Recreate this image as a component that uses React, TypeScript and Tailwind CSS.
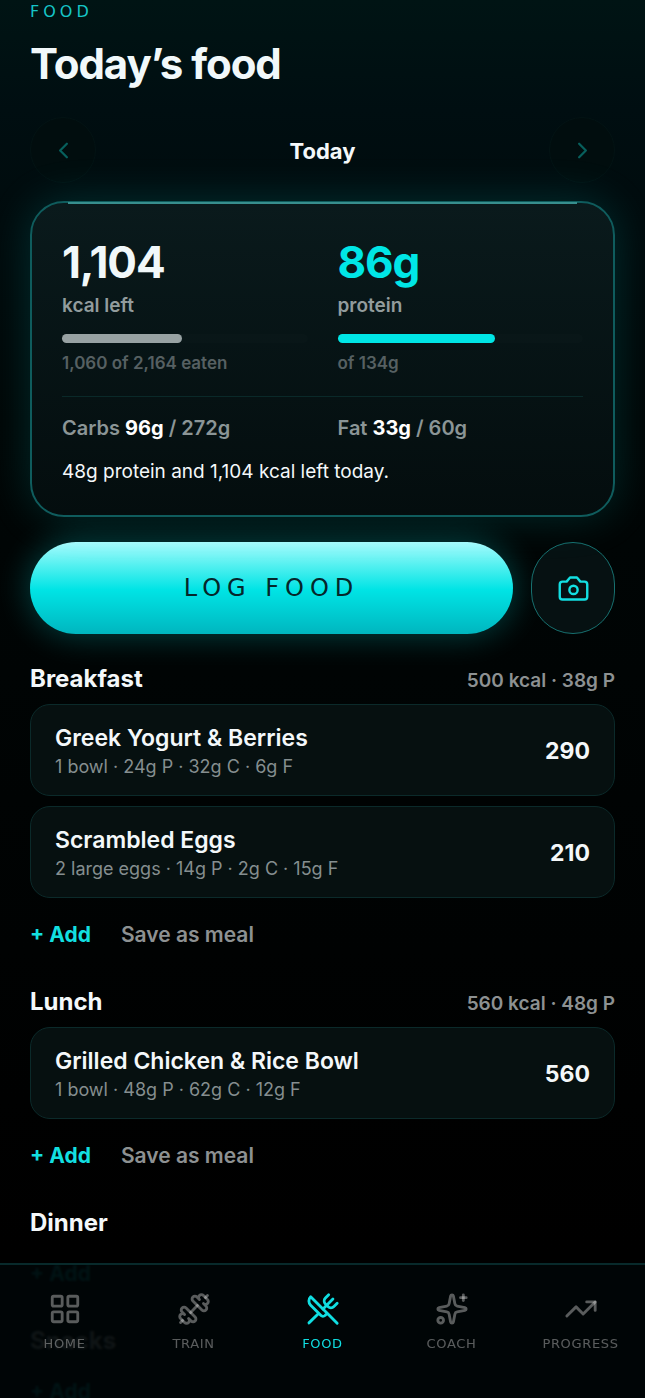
import React, { useState } from 'react';
import {
  ChevronLeft,
  ChevronRight,
  Dumbbell,
  LayoutGrid,
  LucideIcon,
  Sparkles,
  TrendingUp,
  UtensilsCrossed,
} from 'lucide-react';

interface FoodItem {
  name: string;
  detail: string;
  kcal: number;
}

interface Meal {
  name: string;
  summary?: string;
  items: FoodItem[];
}

const MEALS: Meal[] = [
  {
    name: 'Breakfast',
    summary: '500 kcal · 38g P',
    items: [
      { name: 'Greek Yogurt & Berries', detail: '1 bowl · 24g P · 32g C · 6g F', kcal: 290 },
      { name: 'Scrambled Eggs', detail: '2 large eggs · 14g P · 2g C · 15g F', kcal: 210 },
    ],
  },
  {
    name: 'Lunch',
    summary: '560 kcal · 48g P',
    items: [
      { name: 'Grilled Chicken & Rice Bowl', detail: '1 bowl · 48g P · 62g C · 12g F', kcal: 560 },
    ],
  },
  { name: 'Dinner', items: [] },
  { name: 'Snacks', items: [] },
];

const TABS: { label: string; icon: LucideIcon }[] = [
  { label: 'HOME', icon: LayoutGrid },
  { label: 'TRAIN', icon: Dumbbell },
  { label: 'FOOD', icon: UtensilsCrossed },
  { label: 'COACH', icon: Sparkles },
  { label: 'PROGRESS', icon: TrendingUp },
];

const CameraIcon: React.FC = () => (
  <svg
    width="33"
    height="33"
    viewBox="0 0 24 24"
    fill="none"
    stroke="currentColor"
    strokeWidth="1.75"
    strokeLinecap="round"
    strokeLinejoin="round"
    aria-hidden="true"
  >
    <path d="M14.5 4h-5L7 7H4a2 2 0 0 0-2 2v9a2 2 0 0 0 2 2h16a2 2 0 0 0 2-2V9a2 2 0 0 0-2-2h-3l-2.5-3z" />
    <circle cx="12" cy="13" r="3" />
  </svg>
);

interface GoalProps {
  value: string;
  label: string;
  note: string;
  done: number;
  total: number;
  accent?: boolean;
}

const Goal: React.FC<GoalProps> = ({ value, label, note, done, total, accent }) => (
  <div>
    <p className={`text-[44px] leading-[52px] font-bold tracking-tight ${accent ? 'text-[#00e6e6]' : 'text-[#f1f8fa]'}`}>
      {value}
    </p>
    <p className="mt-1 text-[19px] leading-7 font-semibold text-[#929c9d]">{label}</p>
    <div className="mt-[14px] h-[9px] rounded-full bg-white/[0.01]">
      <div
        className={`h-full rounded-full ${accent ? 'bg-[#00e6e6]' : 'bg-[#98a2a3]'}`}
        style={{ width: `${(done / total) * 100}%` }}
      />
    </div>
    <p className="mt-2 text-[17px] leading-6 font-semibold text-[#566062]">{note}</p>
  </div>
);

const Macro: React.FC<{ name: string; value: string; goal: string }> = ({ name, value, goal }) => (
  <p className="text-[20px] leading-7 font-semibold text-[#8b9596]">
    {name} <span className="font-bold text-white">{value}</span> / {goal}
  </p>
);

const MealSection: React.FC<{ meal: Meal }> = ({ meal }) => (
  <section>
    <div className="mb-[11px] flex h-7 items-center justify-between">
      <h2 className="text-[24px] leading-7 font-bold text-[#f4f8fa]">{meal.name}</h2>
      {meal.summary && <span className="pt-1 text-[19px] leading-6 font-semibold text-[#8d9192]">{meal.summary}</span>}
    </div>
    {meal.items.map((item) => (
      <button
        key={item.name}
        className="mb-[10px] flex h-[92px] w-full items-center justify-between rounded-[20px] border border-[#0b2a2a] bg-[#061010] px-6 text-left"
      >
        <span className="flex flex-col gap-px pt-1">
          <span className="text-[23px] leading-7 font-semibold text-[#f4f8fa]">{item.name}</span>
          <span className="text-[18px] leading-7 text-[#858e8f]">{item.detail}</span>
        </span>
        <span className="pt-px text-[23px] leading-7 font-bold text-[#f4f8fa]">{item.kcal}</span>
      </button>
    ))}
    <div className="mt-[23px] flex h-7 items-center gap-[30px] text-[21px] leading-7">
      <button className="font-bold text-[#12dfe0]">+ Add</button>
      {meal.items.length > 0 && <button className="font-semibold text-[#8d9192]">Save as meal</button>}
    </div>
  </section>
);

const App: React.FC = () => {
  const [activeTab, setActiveTab] = useState('FOOD');

  return (
    <div className="h-screen overflow-hidden bg-black bg-[linear-gradient(180deg,#001414_0px,#000e11_110px,#000606_420px,#000303_800px,#000_1250px)] font-['Inter',sans-serif] text-white">
      <main className="px-[30px] pt-1">
        <header>
          <p className="font-['DejaVu_Sans',sans-serif] text-[16px] leading-4 tracking-[0.25em] text-[#16c5c7]">FOOD</p>
          <h1 className="mt-[18px] text-[42px] leading-[52px] font-bold tracking-tight text-[#f1f8fa]">Today’s food</h1>
        </header>

        <div className="mt-[27px] flex items-center justify-between">
          <button
            aria-label="Previous day"
            className="flex size-[66px] items-center justify-center rounded-full border border-[#031314] bg-[#010d0e] text-[#075f5c]"
          >
            <ChevronLeft size={27} strokeWidth={2} />
          </button>
          <span className="pt-0.5 text-[22px] leading-7 font-bold text-[#f4f8fa]">Today</span>
          <button
            aria-label="Next day"
            className="flex size-[66px] items-center justify-center rounded-full border border-[#031314] bg-[#010d0e] text-[#075f5c]"
          >
            <ChevronRight size={27} strokeWidth={2} />
          </button>
        </div>

        {/* Daily summary */}
        <section className="relative mt-[18px] rounded-[34px] border-2 border-[#0f5c5d] bg-linear-to-b from-[#0a1a1c] to-[#040d0e] px-[30px] pt-[33px] pb-[29px] shadow-[0_0_44px_rgba(0,225,225,0.17)]">
          <div className="absolute -top-px right-9 left-9 h-[2px] bg-[#388f8e]" />
          <div className="grid grid-cols-2 gap-x-[30px]">
            <Goal value="1,104" label="kcal left" note="1,060 of 2,164 eaten" done={1060} total={2164} />
            <Goal value="86g" label="protein" note="of 134g" done={86} total={134} accent />
          </div>
          <div className="mt-[21px] grid grid-cols-2 gap-x-[30px] border-t border-[#0a2929] pt-[17px]">
            <Macro name="Carbs" value="96g" goal="272g" />
            <Macro name="Fat" value="33g" goal="60g" />
          </div>
          <p className="mt-4 text-[19px] leading-7 text-[#f4f8fa]">48g protein and 1,104 kcal left today.</p>
        </section>

        <div className="mt-[25px] flex gap-[18px]">
          <button className="h-[92px] flex-1 rounded-full bg-[linear-gradient(180deg,#a9fbfd_0%,#55f0f0_25%,#00e4e5_52%,#00b6bf_100%)] font-['DejaVu_Sans',sans-serif] text-[24px] tracking-[0.25em] text-[#05262a] shadow-[0_0_34px_rgba(0,225,225,0.3)]">
            LOG FOOD
          </button>
          <button
            aria-label="Log food with camera"
            className="flex h-[92px] w-[84px] items-center justify-center rounded-full border border-[#17706f] bg-[#061112] text-[#13dfe2]"
          >
            <CameraIcon />
          </button>
        </div>

        <div className="mt-[31px] flex flex-col gap-[39px]">
          {MEALS.map((meal) => (
            <MealSection key={meal.name} meal={meal} />
          ))}
        </div>
      </main>

      <nav className="fixed inset-x-0 bottom-0 grid h-[135px] grid-cols-5 items-start border-t-2 border-[#082a2b] bg-[#000506]/94 pt-[27px] backdrop-blur-[1px]">
        {TABS.map(({ label, icon: Icon }) => (
          <button
            key={label}
            onClick={() => setActiveTab(label)}
            className={`flex flex-col items-center gap-[10px] ${activeTab === label ? 'text-[#10dfe2]' : 'text-white/35'}`}
          >
            <Icon size={34} strokeWidth={2} />
            <span className="font-['DejaVu_Sans',sans-serif] text-[13px] leading-4 tracking-wider">{label}</span>
          </button>
        ))}
      </nav>
    </div>
  );
};

export default App;
